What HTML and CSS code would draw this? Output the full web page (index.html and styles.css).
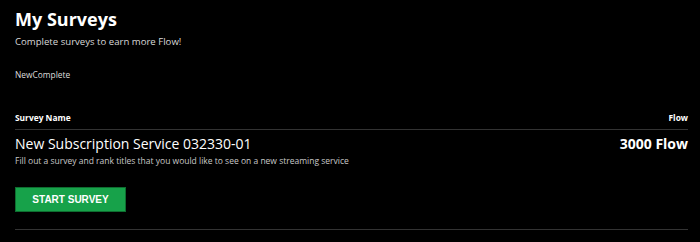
FILE: index.html
```html
<!DOCTYPE html>
<html lang="en">
<head>
    <meta charset="UTF-8">
    <meta name="viewport" content="width=device-width, initial-scale=1.0">
    <title>My Surveys</title>
    <link rel="stylesheet" href="styles.css">
</head>
<body>
    <div class="container">
        <div class="header">
            <h1>My Surveys</h1>
            <p class="subtitle">Complete surveys to earn more Flow!</p>
        </div>
        <div class="tabs">
            <span class="tab active">New</span><span class="tab">Complete</span>
        </div>
        <div class="table-head">
            <span>Survey Name</span>
            <span>Flow</span>
        </div>
        <div class="survey">
            <div class="survey-top">
                <span class="survey-name">New Subscription Service 032330-01</span>
                <span class="survey-flow">3000 Flow</span>
            </div>
            <p class="survey-desc">Fill out a survey and rank titles that you would like to see on a new streaming service</p>
            <button class="start-btn">START SURVEY</button>
        </div>
    </div>
</body>
</html>
```

FILE: styles.css
```css
body, html {
    margin: 0;
    padding: 0;
    background-color: #000;
    color: #fff;
    font-family: "Open Sans", Arial, sans-serif;
}
.container {
    padding: 7px 12px 0 15px;
}
h1 {
    margin: 0;
    font-size: 18px;
    font-weight: 700;
    line-height: 24px;
}
.subtitle {
    margin: 4px 0 0;
    font-size: 9.6px;
    line-height: 14px;
    color: #d8d8d8;
}
.tabs {
    margin-top: 20px;
    font-size: 8.4px;
    line-height: 12px;
    color: #ddd;
}
.table-head {
    display: flex;
    justify-content: space-between;
    margin-top: 31px;
    padding-bottom: 5px;
    border-bottom: 1px solid #333;
    font-size: 8.4px;
    line-height: 12px;
    font-weight: 700;
}
.survey {
    padding: 4px 0 17px;
    border-bottom: 1px solid #333;
}
.survey-top {
    display: flex;
    justify-content: space-between;
    align-items: center;
}
.survey-name {
    font-size: 14px;
    line-height: 20px;
}
.survey-flow {
    font-size: 14px;
    line-height: 20px;
    font-weight: 700;
}
.survey-desc {
    margin: 1px 0 0;
    font-size: 8.5px;
    line-height: 12px;
    color: #c8c8c8;
}
.start-btn {
    display: block;
    margin-top: 20px;
    width: 111px;
    height: 25px;
    padding: 0;
    background-color: #17a24a;
    border: 1px solid #0e6e30;
    color: #fff;
    font-family: "Liberation Sans", Arial, sans-serif;
    font-weight: 700;
    font-size: 10px;
    cursor: pointer;
}
```
